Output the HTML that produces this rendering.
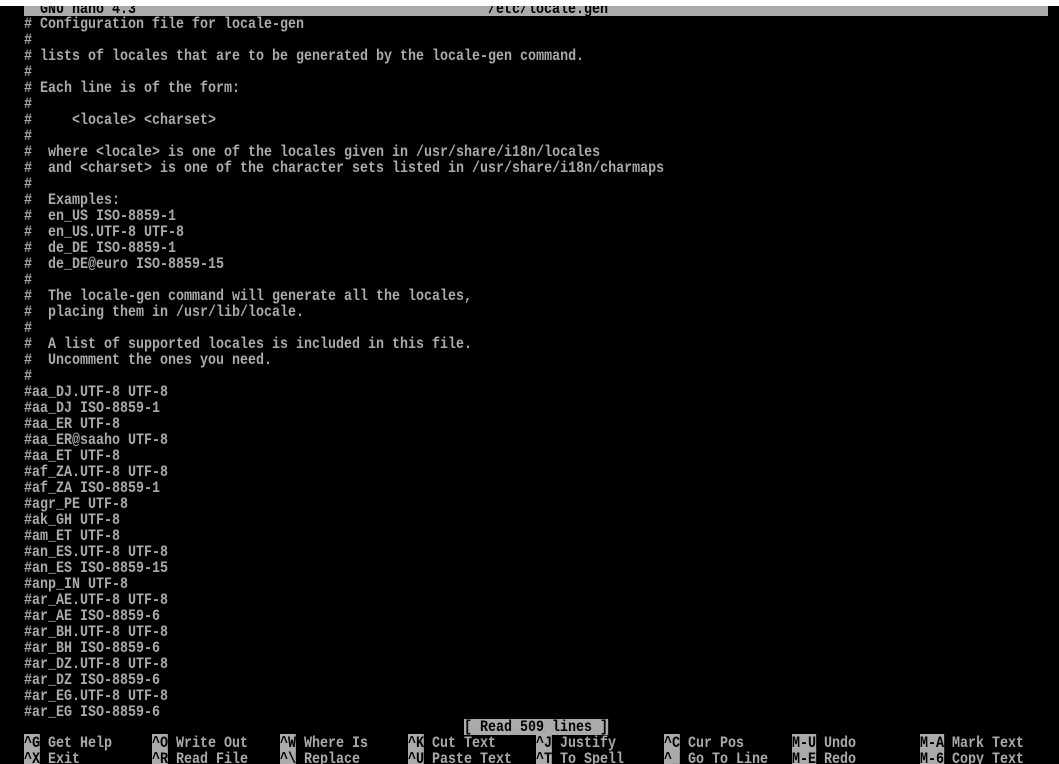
<!DOCTYPE html>
<html><head><meta charset="utf-8"><style>
html,body{margin:0;padding:0;background:#000;width:1059px;height:764px;overflow:hidden}
body{position:relative;font-family:"Liberation Mono","DejaVu Sans Mono",monospace;font-size:16px;font-weight:bold;color:#aaa}
.top{position:absolute;left:0;top:0;width:1059px;height:6px;background:#fff}
.bar{position:absolute;left:24px;top:6px;width:1024px;height:10px;background:#aaa;overflow:hidden}
.bar span{position:absolute;top:-5px;line-height:16px;color:#000;white-space:pre;transform:scaleX(0.8333);transform-origin:0 0}
pre{margin:0;position:absolute;left:24px;top:16px;font-family:inherit;font-size:16px;font-weight:bold;line-height:16px;white-space:pre;transform:scaleX(0.8333);transform-origin:0 0}
.st{position:absolute;left:464px;top:719px;height:16px;line-height:16px;background:#aaa;color:#000;white-space:pre;transform:scaleX(0.8333);transform-origin:0 0}
.sc{position:absolute;line-height:16px;height:16px;white-space:pre;transform:scaleX(0.8333);transform-origin:0 0}
.k{background:#aaa;color:#000}
</style></head><body>
<div class="top"></div>
<div class="bar"><span style="left:16px">GNU nano 4.3</span><span style="left:464px">/etc/locale.gen</span></div>
<pre># Configuration file for locale-gen
#
# lists of locales that are to be generated by the locale-gen command.
#
# Each line is of the form:
#
#     &lt;locale&gt; &lt;charset&gt;
#
#  where &lt;locale&gt; is one of the locales given in /usr/share/i18n/locales
#  and &lt;charset&gt; is one of the character sets listed in /usr/share/i18n/charmaps
#
#  Examples:
#  en_US ISO-8859-1
#  en_US.UTF-8 UTF-8
#  de_DE ISO-8859-1
#  de_DE@euro ISO-8859-15
#
#  The locale-gen command will generate all the locales,
#  placing them in /usr/lib/locale.
#
#  A list of supported locales is included in this file.
#  Uncomment the ones you need.
#
#aa_DJ.UTF-8 UTF-8
#aa_DJ ISO-8859-1
#aa_ER UTF-8
#aa_ER@saaho UTF-8
#aa_ET UTF-8
#af_ZA.UTF-8 UTF-8
#af_ZA ISO-8859-1
#agr_PE UTF-8
#ak_GH UTF-8
#am_ET UTF-8
#an_ES.UTF-8 UTF-8
#an_ES ISO-8859-15
#anp_IN UTF-8
#ar_AE.UTF-8 UTF-8
#ar_AE ISO-8859-6
#ar_BH.UTF-8 UTF-8
#ar_BH ISO-8859-6
#ar_DZ.UTF-8 UTF-8
#ar_DZ ISO-8859-6
#ar_EG.UTF-8 UTF-8
#ar_EG ISO-8859-6</pre>
<div class="st">[ Read 509 lines ]</div>
<div class="sc" style="left:24px;top:735px"><span class="k">^G</span> Get Help</div>
<div class="sc" style="left:24px;top:751px"><span class="k">^X</span> Exit</div>
<div class="sc" style="left:152px;top:735px"><span class="k">^O</span> Write Out</div>
<div class="sc" style="left:152px;top:751px"><span class="k">^R</span> Read File</div>
<div class="sc" style="left:280px;top:735px"><span class="k">^W</span> Where Is</div>
<div class="sc" style="left:280px;top:751px"><span class="k">^\</span> Replace</div>
<div class="sc" style="left:408px;top:735px"><span class="k">^K</span> Cut Text</div>
<div class="sc" style="left:408px;top:751px"><span class="k">^U</span> Paste Text</div>
<div class="sc" style="left:536px;top:735px"><span class="k">^J</span> Justify</div>
<div class="sc" style="left:536px;top:751px"><span class="k">^T</span> To Spell</div>
<div class="sc" style="left:664px;top:735px"><span class="k">^C</span> Cur Pos</div>
<div class="sc" style="left:664px;top:751px"><span class="k">^_</span> Go To Line</div>
<div class="sc" style="left:792px;top:735px"><span class="k">M-U</span> Undo</div>
<div class="sc" style="left:792px;top:751px"><span class="k">M-E</span> Redo</div>
<div class="sc" style="left:920px;top:735px"><span class="k">M-A</span> Mark Text</div>
<div class="sc" style="left:920px;top:751px"><span class="k">M-6</span> Copy Text</div>
</body></html>
